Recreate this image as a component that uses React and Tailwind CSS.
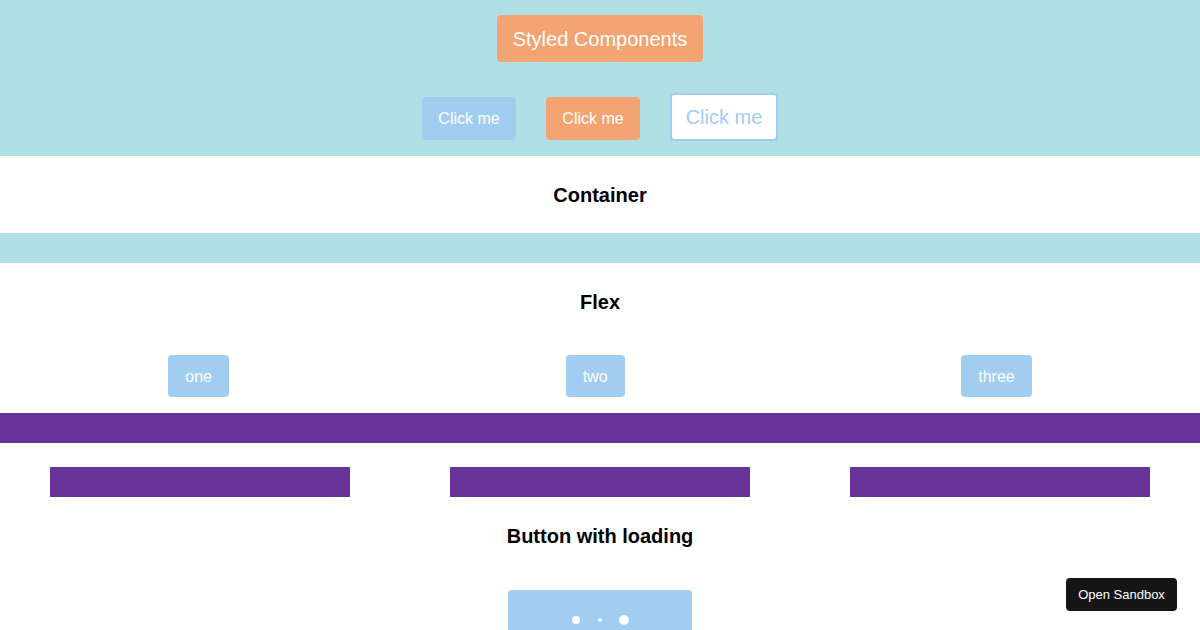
export default function App() {
  const font = { fontFamily: '"Liberation Sans", Arial, sans-serif' };
  return (
    <div className="relative w-full min-h-[630px] h-[630px] overflow-hidden bg-white font-['Liberation_Sans',Arial,sans-serif]">
      <section className="bg-[#b0dfe5] h-[156px] pt-[15px] flex flex-col items-center">
        <button className="h-[47px] px-[16px] bg-[#f4a372] text-white text-[20px] rounded-[4px]">
          Styled Components
        </button>
        <div className="flex items-start gap-[30px] mt-[31px]">
          <button className="mt-[4px] w-[94px] h-[43px] bg-[#a1cdf1] text-white text-[16px] rounded-[4px]">
            Click me
          </button>
          <button className="mt-[4px] w-[94px] h-[43px] bg-[#f4a372] text-white text-[16px] rounded-[4px]">
            Click me
          </button>
          <button className="w-[108px] h-[48px] bg-white border-2 border-[#a1cdf1] text-[#a1cdf1] text-[20px] rounded-[4px]">
            Click me
          </button>
        </div>
      </section>

      <div className="h-[77px] flex items-center justify-center">
        <h2 className="text-[20px] font-bold text-black">Container</h2>
      </div>
      <div className="h-[30px] bg-[#b0dfe5]" />

      <div className="h-[78px] flex items-center justify-center">
        <h2 className="text-[20px] font-bold text-black">Flex</h2>
      </div>
      <div className="h-[72px] pt-[14px] flex justify-around items-start">
        <div className="h-[42px] pt-[2px] px-[17px] flex items-center bg-[#a1cdf1] text-white text-[16px] rounded-[4px]">one</div>
        <div className="h-[42px] pt-[2px] px-[17px] flex items-center bg-[#a1cdf1] text-white text-[16px] rounded-[4px]">two</div>
        <div className="h-[42px] pt-[2px] px-[17px] flex items-center bg-[#a1cdf1] text-white text-[16px] rounded-[4px]">three</div>
      </div>
      <div className="h-[30px] bg-[#663399]" />

      <div className="pt-[24px] px-[50px] grid grid-cols-3 gap-[100px]">
        <div className="h-[30px] bg-[#663399]" />
        <div className="h-[30px] bg-[#663399]" />
        <div className="h-[30px] bg-[#663399]" />
      </div>

      <div className="h-[78px] flex items-center justify-center">
        <h2 className="text-[20px] font-bold text-black">Button with loading</h2>
      </div>
      <div className="flex justify-center mt-[15px]">
        <button className="w-[184px] h-[60px] bg-[#a1cdf1] rounded-[4px] flex items-center justify-center">
          <span className="w-[8px] h-[8px] rounded-full bg-white" />
          <span className="w-[4px] h-[4px] rounded-full bg-white ml-[18px]" />
          <span className="w-[10px] h-[10px] rounded-full bg-white ml-[17px]" />
        </button>
      </div>

      <button
        style={font}
        className="absolute right-[23px] bottom-[19px] w-[111px] h-[33px] bg-[#151515] text-white text-[13px] rounded-[4px] flex items-center justify-center"
      >
        Open Sandbox
      </button>
    </div>
  );
}
